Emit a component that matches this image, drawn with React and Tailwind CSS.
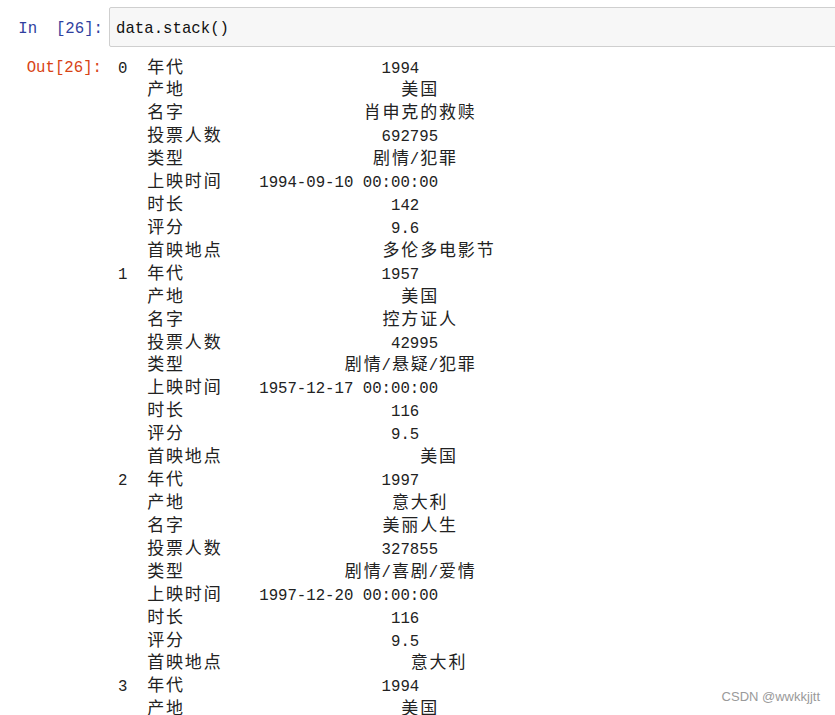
import React from 'react';

const records = [
  ['1994', '美国', '肖申克的救赎', '692795', '剧情/犯罪', '1994-09-10 00:00:00', '142', '9.6', '多伦多电影节'],
  ['1957', '美国', '控方证人', '42995', '剧情/悬疑/犯罪', '1957-12-17 00:00:00', '116', '9.5', '美国'],
  ['1997', '意大利', '美丽人生', '327855', '剧情/喜剧/爱情', '1997-12-20 00:00:00', '116', '9.5', '意大利'],
  ['1994', '美国'],
];

const labels = ['年代', '产地', '名字', '投票人数', '类型', '上映时间', '时长', '评分', '首映地点'];

// pandas pads by len(), so CJK columns drift — keep that
const lines = [];
records.forEach((rec, i) => {
  rec.forEach((val, j) => {
    const idx = j === 0 ? String(i) + '  ' : '   ';
    lines.push(idx + labels[j].padEnd(4) + '    ' + val.padStart(19));
  });
});

const isWide = (ch) => /[\u3000-\u9fff\uff00-\uffef]/.test(ch);

function MonoLine({ text }) {
  const parts = [];
  let run = '';
  [...text].forEach((ch, k) => {
    if (isWide(ch)) {
      if (run) {
        parts.push(<span key={'r' + k}>{run}</span>);
        run = '';
      }
      parts.push(
        <span
          key={'w' + k}
          className="inline-block w-[18.84px] text-center font-['Noto_Sans_CJK_SC',sans-serif] text-[17px]"
        >
          {ch}
        </span>
      );
    } else {
      run += ch;
    }
  });
  if (run) parts.push(<span key="end">{run}</span>);
  return <div className="flex h-[22.93px] items-baseline whitespace-pre leading-[22.93px]">{parts}</div>;
}

export default function App() {
  return (
    <div className="relative h-[715px] w-[835px] overflow-hidden bg-white pt-[7px] font-['Liberation_Mono',monospace] text-[15.7px] text-[#222]">
      {/* input cell */}
      <div className="flex w-[850px]">
        <div className="flex h-[40px] w-[109px] shrink-0 items-center justify-end pr-[6px] pt-[6px] whitespace-pre text-[#303f9f]">
          In  [26]:
        </div>
        <div className="flex h-[40px] flex-1 items-center rounded-[2px] border border-[#cfcfcf] bg-[#f7f7f7] px-[6px] pt-[6px] text-[#111]">
          data.stack()
        </div>
      </div>

      {/* output */}
      <div className="mt-[7.5px] flex">
        <div className="flex h-[22.93px] w-[109px] shrink-0 items-center justify-end pr-[7px] pt-[6px] text-[#d84315]">
          Out[26]:
        </div>
        <div className="pl-[9px]">
          {lines.map((l, i) => (
            <MonoLine key={i} text={l} />
          ))}
        </div>
      </div>

      <div className="absolute bottom-[9px] right-[15px] font-['Liberation_Sans',Arial,sans-serif] text-[13px] text-[#9a9a9a]">
        CSDN @wwkkjjtt
      </div>
    </div>
  );
}
